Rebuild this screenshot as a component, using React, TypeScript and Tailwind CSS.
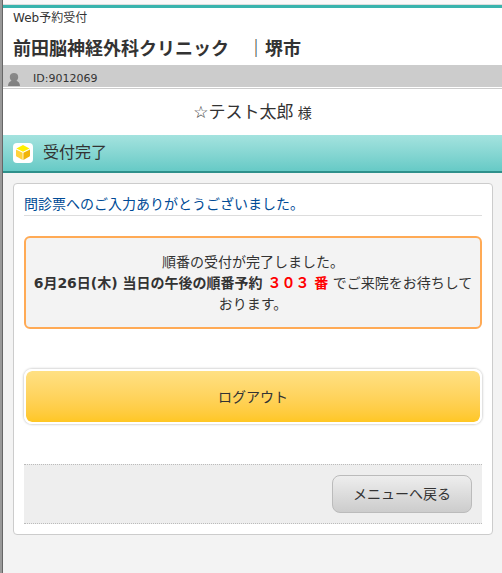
import React from 'react';

const UserIcon = () => (
  <svg viewBox="0 0 12 13" className="w-3 h-[13px]" aria-hidden="true">
    <defs>
      <linearGradient id="userFill" x1="0" y1="0" x2="0" y2="1">
        <stop offset="0" stopColor="#8a8a8a" />
        <stop offset="1" stopColor="#808080" />
      </linearGradient>
    </defs>
    <path
      d="M6 0C8.6 0 10.2 1.6 10.2 3.9C10.2 5.8 9.4 7 8.4 7.8C10.6 8.4 11.8 10 12 13H0C0.2 10 1.4 8.4 3.6 7.8C2.6 7 1.8 5.8 1.8 3.9C1.8 1.6 3.4 0 6 0Z"
      fill="url(#userFill)"
    />
  </svg>
);

const CubeIcon = () => (
  <svg viewBox="0 0 20 20" className="w-5 h-5" aria-hidden="true">
    <rect width="20" height="20" rx="4" fill="#fff" />
    <path d="M10 2L16.6 5.4L10 8.8L3.4 5.4Z" fill="#fff000" />
    <path d="M3 6.4L9.6 9.8V17L3.6 13.6Q3 13.2 3 12.6Z" fill="#ffd23c" />
    <path d="M17 6.4L10.4 9.8V17L16.4 13.6Q17 13.2 17 12.6Z" fill="#f0b40a" />
  </svg>
);

const App = () => {
  return (
    <div className="min-h-screen bg-[#f3f3f3] border-l-2 border-[#999999] text-[#333333] text-sm font-['DejaVu_Sans','Noto_Sans_CJK_JP',sans-serif]">
      <div className="min-h-screen border-l border-[#666666]">
        <div className="h-[5px] bg-[#fcf8f9] border-b border-[#dddddd]"></div>

        <header className="bg-white border-t-3 border-[#3bb3ad] px-2.5">
          <p className="text-xs leading-5">Web予約受付</p>
          <h1 className="pt-1 text-lg leading-[33px] font-bold">前田脳神経外科クリニック　｜堺市</h1>
        </header>

        <div className="bg-white border-b border-[#cccccc] pb-px">
          <div className="h-[22px] bg-[#cccccc] flex items-end gap-[13px] pl-[5px] pb-px">
            <UserIcon />
            <span className="text-[11px] leading-[14px]">ID:9012069</span>
          </div>
        </div>

        <div className="bg-white h-[46px] flex items-center justify-center">
          <p className="leading-6">
            <span className="text-[17px]">☆テスト太郎</span> 様
          </p>
        </div>

        <div className="h-[38px] flex items-center gap-2.5 px-2.5 bg-linear-to-b from-[#a4e3df] to-[#66cac6] border-b-2 border-[#2f908b]">
          <CubeIcon />
          <h2 className="text-base leading-6">受付完了</h2>
        </div>

        <main className="mt-2.5 ml-2.5 mr-[9px] p-2.5 bg-white border border-[#cccccc] rounded">
          <p className="h-[22px] leading-5 text-[#004b96] border-b border-[#dddddd]">
            問診票へのご入力ありがとうございました。
          </p>

          <div className="mt-5 px-1.5 pt-3.5 pb-3 text-center leading-[21px] bg-[#f3f3f3] border-2 border-[#ffaa55] rounded-md">
            順番の受付が完了しました。
            <br />
            <b>
              6月26日(木) 当日の午後の順番予約 <span className="text-[#ff0000]">３０３ 番</span>
            </b>{' '}
            でご来院をお待ちしております。
          </div>

          <button
            type="button"
            className="mt-10 w-full h-[55px] border-2 border-white rounded-lg bg-linear-to-b from-[#ffe083] to-[#ffc722] bg-clip-padding shadow-[0_0_2px_1px_#d8d8d8] cursor-pointer"
          >
            ログアウト
          </button>

          <div className="mt-10 p-2.5 flex justify-end bg-[#eeeeee] border-y border-dotted border-[#bbbbbb]">
            <button
              type="button"
              className="h-[38px] px-5 border border-[#bbbbbb] rounded-lg bg-linear-to-b from-[#eeeeee] to-[#cccccc] cursor-pointer"
            >
              メニューへ戻る
            </button>
          </div>
        </main>
      </div>
    </div>
  );
};

export default App;
